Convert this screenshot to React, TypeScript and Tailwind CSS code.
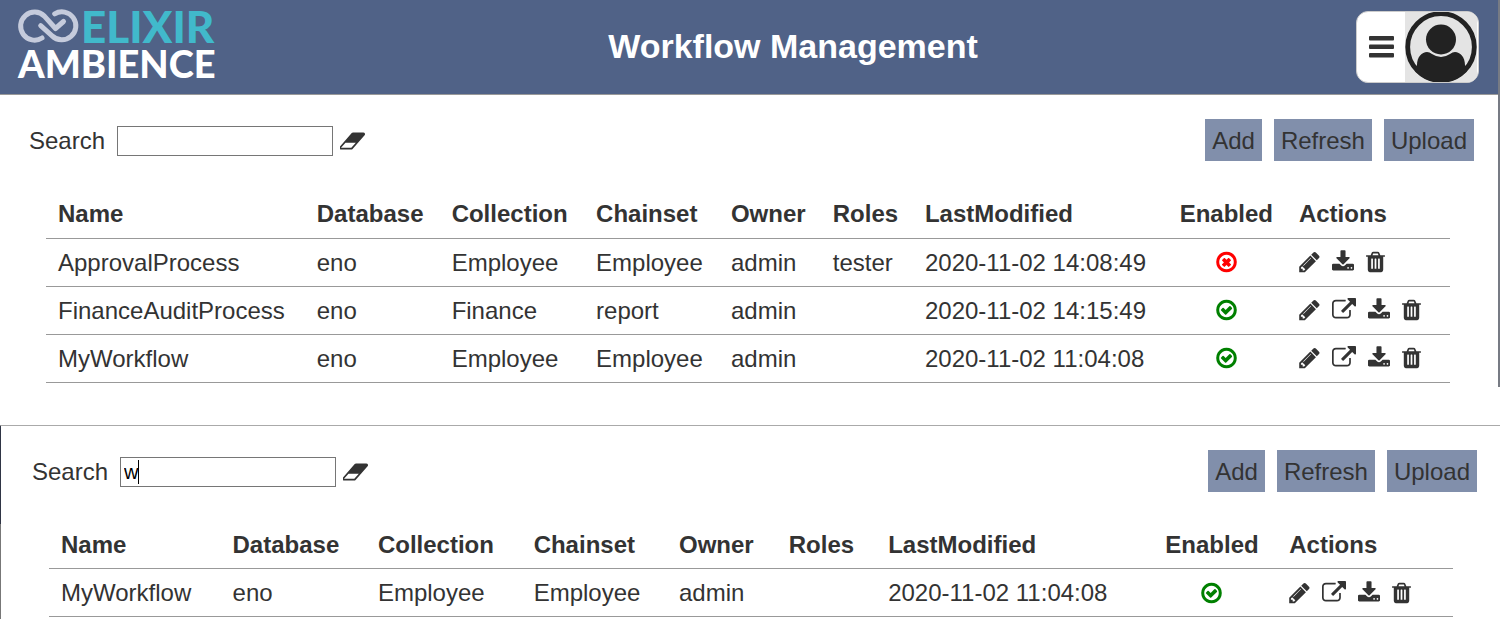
import { useId, useState } from "react";

const ICONS = {
  pencil: {
    box: "128 0 1536 1792",
    path: "M491 1536l91-91-235-235-91 91v107h128v128h107zm523-928q0-22-22-22-10 0-17 7l-542 542q-7 7-7 17 0 22 22 22 10 0 17-7l542-542q7-7 7-17zm-54-192l416 416-832 832h-416v-416zm683 96q0 53-37 90l-166 166-416-416 166-165q36-38 90-38 53 0 91 38l235 234q37 39 37 91z",
  },
  external: {
    box: "0 0 1792 1792",
    path: "M1408 928v320q0 119-84.5 203.5t-203.5 84.5h-832q-119 0-203.5-84.5t-84.5-203.5v-832q0-119 84.5-203.5t203.5-84.5h704q14 0 23 9t9 23v64q0 14-9 23t-23 9h-704q-66 0-113 47t-47 113v832q0 66 47 113t113 47h832q66 0 113-47t47-113v-320q0-14 9-23t23-9h64q14 0 23 9t9 23zm384-864v512q0 26-19 45t-45 19-45-19l-176-176-652 652q-10 10-23 10t-23-10l-114-114q-10-10-10-23t10-23l652-652-176-176q-19-19-19-45t19-45 45-19h512q26 0 45 19t19 45z",
  },
  download: {
    box: "64 0 1664 1792",
    path: "M1344 1344q0-26-19-45t-45-19-45 19-19 45 19 45 45 19 45-19 19-45zm256 0q0-26-19-45t-45-19-45 19-19 45 19 45 45 19 45-19 19-45zm128-224v320q0 40-28 68t-68 28h-1472q-40 0-68-28t-28-68v-320q0-40 28-68t68-28h465l135 136q58 56 136 56t136-56l136-136h464q40 0 68 28t28 68zm-325-569q17 41-14 70l-448 448q-18 19-45 19t-45-19l-448-448q-31-29-14-70 17-39 59-39h256v-448q0-26 19-45t45-19h256q26 0 45 19t19 45v448h256q42 0 59 39z",
  },
  trash: {
    box: "192 0 1408 1792",
    path: "M704 1376v-704q0-14-9-23t-23-9h-64q-14 0-23 9t-9 23v704q0 14 9 23t23 9h64q14 0 23-9t9-23zm256 0v-704q0-14-9-23t-23-9h-64q-14 0-23 9t-9 23v704q0 14 9 23t23 9h64q14 0 23-9t9-23zm256 0v-704q0-14-9-23t-23-9h-64q-14 0-23 9t-9 23v704q0 14 9 23t23 9h64q14 0 23-9t9-23zm-544-992h448l-48-117q-7-9-17-11h-317q-10 2-17 11zm928 32v64q0 14-9 23t-23 9h-96v948q0 83-47 143.5t-113 60.5h-832q-66 0-113-58.5t-47-141.5v-952h-96q-14 0-23-9t-9-23v-64q0-14 9-23t23-9h309l70-167q15-37 54-63t79-26h320q40 0 79 26t54 63l70 167h309q14 0 23 9t9 23z",
  },
  eraser: {
    box: "0 0 1920 1792",
    path: "M832 1408l336-384h-768l-336 384h768zm1013-1077q15 34 9.5 71.5t-30.5 65.5l-896 1024q-38 44-96 44h-768q-38 0-69.5-20.5t-47.5-54.5q-15-34-9.5-71.5t30.5-65.5l896-1024q38-44 96-44h768q38 0 69.5 20.5t47.5 54.5z",
  },
  check: {
    box: "128 0 1536 1792",
    path: "M1299 813l-422 422q-19 19-45 19t-45-19l-294-294q-19-19-19-45t19-45l102-102q19-19 45-19t45 19l147 147 275-275q19-19 45-19t45 19l102 102q19 19 19 45t-19 45zm141 83q0-148-73-273t-198-198-273-73-273 73-198 198-73 273 73 273 198 198 273 73 273-73 198-198 73-273zm224 0q0 209-103 385.5t-279.5 279.5-385.5 103-385.5-103-279.5-279.5-103-385.5 103-385.5 279.5-279.5 385.5-103 385.5 103 279.5 279.5 103 385.5z",
  },
  times: {
    box: "128 0 1536 1792",
    path: "M1225 1111l-146 146q-10 10-23 10t-23-10l-137-137-137 137q-10 10-23 10t-23-10l-146-146q-10-10-10-23t10-23l137-137-137-137q-10-10-10-23t10-23l146-146q10-10 23-10t23 10l137 137 137-137q10-10 23-10t23 10l146 146q10 10 10 23t-10 23l-137 137 137 137q10 10 10 23t-10 23zm215-215q0-148-73-273t-198-198-273-73-273 73-198 198-73 273 73 273 198 198 273 73 273-73 198-198 73-273zm224 0q0 209-103 385.5t-279.5 279.5-385.5 103-385.5-103-279.5-279.5-103-385.5 103-385.5 279.5-279.5 385.5-103 385.5 103 279.5 279.5 103 385.5z",
  },
};

type IconName = keyof typeof ICONS;

function Icon({ name, className }: { name: IconName; className: string }) {
  return (
    <svg viewBox={ICONS[name].box} fill="currentColor" className={`h-6 ${className}`} aria-hidden="true">
      <path d={ICONS[name].path} />
    </svg>
  );
}

type Workflow = {
  name: string;
  database: string;
  collection: string;
  chainset: string;
  owner: string;
  roles: string;
  modified: string;
  enabled: boolean;
};

const WORKFLOWS: Workflow[] = [
  { name: "ApprovalProcess", database: "eno", collection: "Employee", chainset: "Employee", owner: "admin", roles: "tester", modified: "2020-11-02 14:08:49", enabled: false },
  { name: "FinanceAuditProcess", database: "eno", collection: "Finance", chainset: "report", owner: "admin", roles: "", modified: "2020-11-02 14:15:49", enabled: true },
  { name: "MyWorkflow", database: "eno", collection: "Employee", chainset: "Employee", owner: "admin", roles: "", modified: "2020-11-02 11:04:08", enabled: true },
];

const COLUMNS = ["Name", "Database", "Collection", "Chainset", "Owner", "Roles", "LastModified", "Enabled", "Actions"];

function Logo() {
  return (
    <svg viewBox="0 0 212 80" className="h-20 w-[212px] shrink-0 overflow-visible" role="img" aria-label="Elixir Ambience">
      <g fill="none" stroke="#c5cbdc" strokeWidth="5" strokeLinecap="round" strokeLinejoin="round">
        <path d="M24 31A14 14 0 1 1 26.4 9.1L37.5 21.5L45.5 14.5" />
        <path d="M36.700 6.800A14 14 0 1 1 34.1 28.9L22.700 18.700" />
      </g>
      <text x="63" y="36" fontSize="44" className="fill-[#41b9cb] font-[Lato] font-black">ELIXIR</text>
      <text x="0" y="71" fontSize="38" className="fill-white font-[Lato] font-black">AMBIENCE</text>
    </svg>
  );
}

function Header() {
  return (
    <header className="flex items-center border-b border-[#999] bg-[#506287] py-[7px] pr-[19px] pl-[18px]">
      <Logo />
      <h1 className="flex-1 pb-0.5 text-center text-[34px] leading-10 font-bold text-white">Workflow Management</h1>
      <div className="flex h-[72px] items-center overflow-hidden rounded-xl border border-[#ccc] bg-white pr-px">
        <button type="button" aria-label="Menu" className="pr-[11px] pl-3">
          <svg viewBox="0 0 25 22" className="h-[22px] w-[25px]" fill="#333">
            <rect y="0" width="25" height="4.4" rx="1" />
            <rect y="8.5" width="25" height="4.4" rx="1" />
            <rect y="17" width="25" height="4.4" rx="1" />
          </svg>
        </button>
        <button type="button" aria-label="Account" className="bg-[#e4e4e4]">
          <svg viewBox="0 0 72 72" className="size-[72px]">
            <clipPath id="avatar-ring">
              <circle cx="36" cy="36" r="35.5" />
            </clipPath>
            <circle cx="36" cy="36" r="33.3" fill="none" stroke="#222" strokeWidth="4.8" />
            <circle cx="36" cy="28.5" r="15" fill="#222" />
            <path
              d="M12 54C12 46 17 41 22 41Q24.500 41 27 43Q36 49 45 43Q47.500 41 50 41C55 41 60 46 60 54L66 72H6Z"
              fill="#222"
              clipPath="url(#avatar-ring)"
            />
          </svg>
        </button>
      </div>
    </header>
  );
}

function ActionButton({ icon, label, className }: { icon: IconName; label: string; className: string }) {
  return (
    <button type="button" aria-label={label} className="mr-3 block">
      <Icon name={icon} className={className} />
    </button>
  );
}

function WorkflowList({ initialQuery = "" }: { initialQuery?: string }) {
  const [query, setQuery] = useState(initialQuery);
  const searchId = useId();
  const rows = WORKFLOWS.filter((w) => w.name.toLowerCase().includes(query.toLowerCase()));

  return (
    <>
      <div className="flex items-center justify-between">
        <div className="flex items-center pt-0.5">
          <label htmlFor={searchId} className="mr-3">Search</label>
          <div className="relative mr-[7px]">
            <input
              id={searchId}
              type="text"
              value={query}
              onChange={(e) => setQuery(e.target.value)}
              className="block h-[30px] w-[216px] border border-[#767676] bg-white px-[3px] pt-0.5 text-xl text-black"
            />
            {initialQuery && query === initialQuery && (
              <span className="pointer-events-none absolute top-[3px] left-[18px] h-6 w-px bg-black" />
            )}
          </div>
          <button type="button" aria-label="Clear search" onClick={() => setQuery("")}>
            <Icon name="eraser" className="w-[26px]" />
          </button>
        </div>
        <div className="flex gap-3">
          {["Add", "Refresh", "Upload"].map((label) => (
            <button key={label} type="button" className="h-[42px] bg-[#818fab] px-[7px] pt-0.5">
              {label}
            </button>
          ))}
        </div>
      </div>

      <div className="mt-[29px] pr-6 pl-[17px]">
        <table className="w-full border-collapse text-left">
          <thead>
            <tr className="h-12 border-b border-[#999]">
              {COLUMNS.map((column) => (
                <th key={column} scope="col" className={`px-3 pt-px font-bold ${column === "Enabled" ? "text-center" : ""}`}>
                  {column}
                </th>
              ))}
            </tr>
          </thead>
          <tbody>
            {rows.map((w) => (
              <tr key={w.name} className="h-12 border-b border-[#999]">
                <td className="px-3 pt-px">{w.name}</td>
                <td className="px-3 pt-px">{w.database}</td>
                <td className="px-3 pt-px">{w.collection}</td>
                <td className="px-3 pt-px">{w.chainset}</td>
                <td className="px-3 pt-px">{w.owner}</td>
                <td className="px-3 pt-px">{w.roles}</td>
                <td className="px-3 pt-px whitespace-nowrap">{w.modified}</td>
                <td className="px-3">
                  {w.enabled ? (
                    <Icon name="check" className="mx-auto w-[21px] text-[#008000]" />
                  ) : (
                    <Icon name="times" className="mx-auto w-[21px] text-[#ff0000]" />
                  )}
                </td>
                <td className="px-3">
                  <div className="flex">
                    <ActionButton icon="pencil" label={`Edit ${w.name}`} className="w-[21px]" />
                    {w.enabled && <ActionButton icon="external" label={`Open ${w.name}`} className="w-6" />}
                    <ActionButton icon="download" label={`Download ${w.name}`} className="w-[22px]" />
                    <ActionButton icon="trash" label={`Delete ${w.name}`} className="w-[19px]" />
                  </div>
                </td>
              </tr>
            ))}
          </tbody>
        </table>
      </div>
    </>
  );
}

export default function App() {
  return (
    <div className="bg-white font-['Liberation_Sans',Arial,sans-serif] text-2xl leading-7 text-[#333]">
      <section className="border-r-2 border-[#777b84]">
        <Header />
        <div className="pt-6 pr-6 pb-1 pl-[29px]">
          <WorkflowList />
        </div>
      </section>

      <section className="relative mt-[38px] border-t border-l border-t-[#aaa] border-l-[#777]">
        <div className="absolute top-0 -left-px h-[98px] w-px bg-[#2f3545]" />
        <div className="pt-6 pr-[23px] pb-0.5 pl-[31px]">
          <WorkflowList initialQuery="w" />
        </div>
      </section>
    </div>
  );
}
